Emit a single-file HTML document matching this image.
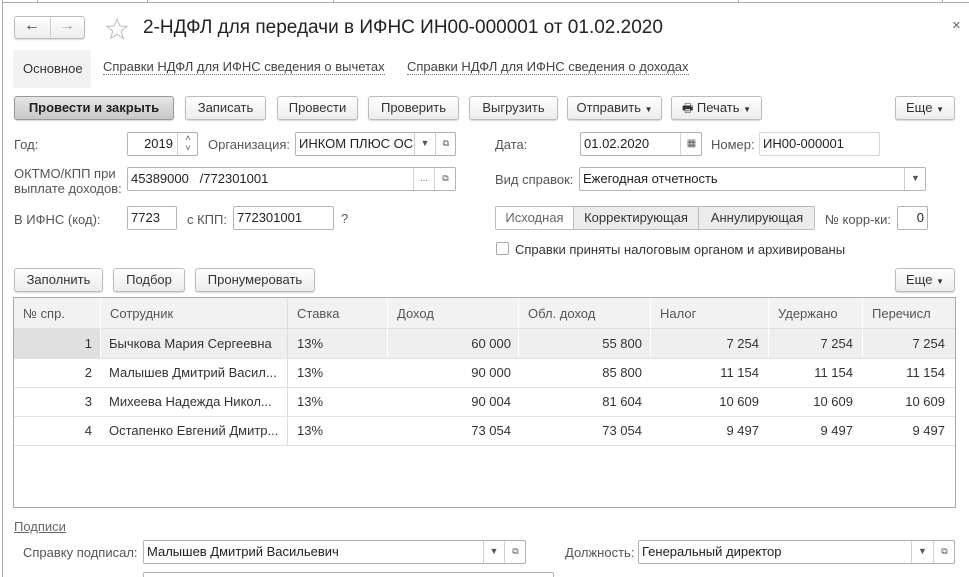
<!DOCTYPE html><html style="overflow:hidden;height:577px"><head><meta charset="utf-8"><style>
*{box-sizing:border-box}html,body{overflow:hidden}body{margin:0;width:969px;height:577px;overflow:hidden;background:#fff;font-family:"Liberation Sans",Arial,sans-serif;font-size:13px;color:#333;position:relative}
.a{position:absolute;white-space:nowrap}
.b{position:absolute;border:1px solid #bcbcbc;border-radius:3px;background:linear-gradient(#fff,#ececec);box-shadow:0 1px 1px rgba(0,0,0,.15);text-align:center;line-height:21px;color:#333}
.f{position:absolute;border:1px solid #b3b3b3;border-radius:2px;background:#fff;line-height:21px;padding-left:3px;color:#222;overflow:hidden}
.s{position:absolute;top:0;bottom:0;border-left:1px solid #d0d0d0;text-align:center;font-size:9px;color:#555}
.l{color:#555}
.lk{color:#444;border-bottom:1px dotted #777;line-height:14px}
.t div{position:absolute}
</style></head><body>
<div class="a" style="left:2px;top:0;width:1px;height:577px;background:#aaa"></div>
<div class="a" style="left:2px;top:2px;width:967px;height:1px;background:#aaa"></div>
<div class="a" style="left:37px;top:0;width:1px;height:3px;background:#aaa"></div>
<div class="a" style="left:147px;top:0;width:1px;height:3px;background:#aaa"></div>
<div class="a" style="left:333px;top:0;width:1px;height:3px;background:#aaa"></div>
<div class="a" style="left:738px;top:0;width:1px;height:3px;background:#aaa"></div>
<div class="a" style="left:942px;top:0;width:1px;height:3px;background:#aaa"></div>

<div class="b" style="left:14px;top:16px;width:71px;height:23px"></div>
<div class="a" style="left:50px;top:18px;width:1px;height:19px;background:#ccc"></div>
<div class="a" style="left:24px;top:17px;font-size:16px;color:#333">&#8592;</div>
<div class="a" style="left:59px;top:17px;font-size:16px;color:#aaa">&#8594;</div>
<svg class="a" style="left:105px;top:17px" width="24" height="24"><polygon points="12,2 14.8,9 22,9.3 16.3,14 18.3,21.5 12,17.2 5.7,21.5 7.7,14 2,9.3 9.2,9" fill="none" stroke="#bbb"/></svg>
<div class="a" style="left:143px;top:17px;font-size:19px;color:#222">2-НДФЛ для передачи в ИФНС ИН00-000001 от 01.02.2020</div>
<div class="a" style="left:952px;top:17px;font-size:15px;color:#666">×</div>

<div class="a" style="left:13px;top:50px;width:78px;height:38px;background:#f2f2f2;border-radius:3px"></div>
<div class="a" style="left:23px;top:61px">Основное</div>
<div class="a lk" style="left:103px;top:60px">Справки НДФЛ для ИФНС сведения о вычетах</div>
<div class="a lk" style="left:407px;top:60px">Справки НДФЛ для ИФНС сведения о доходах</div>

<div class="b" style="left:14px;top:96px;width:160px;height:24px;background:linear-gradient(#e6e6e6,#c8c8c8);border-color:#999;font-weight:bold;color:#222">Провести и закрыть</div>
<div class="b" style="left:185px;top:96px;width:81px;height:24px">Записать</div>
<div class="b" style="left:277px;top:96px;width:81px;height:24px">Провести</div>
<div class="b" style="left:368px;top:96px;width:91px;height:24px">Проверить</div>
<div class="b" style="left:469px;top:96px;width:89px;height:24px">Выгрузить</div>
<div class="b" style="left:567px;top:96px;width:95px;height:24px">Отправить <span style="font-size:8px">▼</span></div>
<div class="b" style="left:671px;top:96px;width:91px;height:24px"><span style="font-size:12px">🖶</span> Печать <span style="font-size:8px">▼</span></div>
<div class="b" style="left:895px;top:96px;width:60px;height:24px">Еще <span style="font-size:8px">▼</span></div>

<div class="a l" style="left:14px;top:137px">Год:</div>
<div class="f" style="left:127px;top:132px;width:71px;height:24px;text-align:right;padding-right:24px">2019<div class="s" style="left:49px;width:21px;line-height:10px">˄<br>˅</div></div>
<div class="a l" style="left:208px;top:137px">Организация:</div>
<div class="f" style="left:295px;top:132px;width:161px;height:24px">ИНКОМ ПЛЮС ОС<div class="s" style="left:118px;width:21px;background:#fff">▼</div><div class="s" style="left:139px;width:21px;background:#fff">⧉</div></div>
<div class="a l" style="left:495px;top:137px">Дата:</div>
<div class="f" style="left:580px;top:132px;width:122px;height:24px">01.02.2020<div class="s" style="left:99px;width:22px;font-size:10px">▦</div></div>
<div class="a l" style="left:711px;top:137px">Номер:</div>
<div class="f" style="left:759px;top:132px;width:121px;height:24px;border-color:#d6d6d6">ИН00-000001</div>

<div class="a l" style="left:14px;top:166px;line-height:15px">ОКТМО/КПП при<br>выплате доходов:</div>
<div class="f" style="left:127px;top:167px;width:329px;height:24px">45389000&nbsp;&nbsp; /772301001<div class="s" style="left:285px;width:21px">...</div><div class="s" style="left:306px;width:22px">⧉</div></div>
<div class="a l" style="left:495px;top:172px">Вид справок:</div>
<div class="f" style="left:579px;top:167px;width:347px;height:24px">Ежегодная отчетность<div class="s" style="left:324px;width:22px">▼</div></div>

<div class="a l" style="left:14px;top:212px">В ИФНС (код):</div>
<div class="f" style="left:127px;top:206px;width:50px;height:24px">7723</div>
<div class="a l" style="left:187px;top:212px">с КПП:</div>
<div class="f" style="left:233px;top:206px;width:101px;height:24px">772301001</div>
<div class="a l" style="left:341px;top:211px">?</div>
<div class="a" style="left:495px;top:206px;width:320px;height:24px;border:1px solid #bcbcbc;border-radius:2px;overflow:hidden">
<div class="a" style="left:0;top:0;width:77px;height:22px;text-align:center;line-height:22px;color:#666">Исходная</div>
<div class="a" style="left:77px;top:0;width:125px;height:22px;text-align:center;line-height:22px;background:#ececec;border-left:1px solid #bcbcbc">Корректирующая</div>
<div class="a" style="left:202px;top:0;width:117px;height:22px;text-align:center;line-height:22px;background:#ececec;border-left:1px solid #bcbcbc">Аннулирующая</div></div>
<div class="a l" style="left:825px;top:212px">№ корр-ки:</div>
<div class="f" style="left:897px;top:206px;width:31px;height:24px;text-align:right;padding-right:3px">0</div>
<div class="a" style="left:496px;top:242px;width:13px;height:13px;border:1px solid #aaa;border-radius:2px"></div>
<div class="a" style="left:515px;top:242px">Справки приняты налоговым органом и архивированы</div>

<div class="b" style="left:14px;top:268px;width:89px;height:24px">Заполнить</div>
<div class="b" style="left:113px;top:268px;width:72px;height:24px">Подбор</div>
<div class="b" style="left:195px;top:268px;width:120px;height:24px">Пронумеровать</div>
<div class="b" style="left:895px;top:268px;width:60px;height:24px">Еще <span style="font-size:8px">▼</span></div>

<div class="a t" style="left:13px;top:297px;width:943px;height:211px;border:1px solid #aaa;overflow:hidden">
<div style="left:0;top:0;width:941px;height:31px;background:#f2f2f2;border-bottom:1px solid #ddd"></div>
<div style="left:0;top:31px;width:941px;height:29px;background:#efefef"></div>
<div style="left:0;top:31px;width:86px;height:29px;background:#e0e0e0"></div>
<div style="left:86px;top:0;width:1px;height:60px;background:#fff"></div>
<div style="left:273px;top:0;width:1px;height:147px;background:#ddd"></div>
<div style="left:373px;top:0;width:1px;height:60px;background:#fff"></div>
<div style="left:504px;top:0;width:1px;height:60px;background:#fff"></div>
<div style="left:636px;top:0;width:1px;height:60px;background:#fff"></div>
<div style="left:754px;top:0;width:1px;height:60px;background:#fff"></div>
<div style="left:848px;top:0;width:1px;height:60px;background:#fff"></div>
<div style="left:0;top:60px;width:941px;height:1px;background:#e2e2e2"></div>
<div style="left:0;top:89px;width:941px;height:1px;background:#e2e2e2"></div>
<div style="left:0;top:118px;width:941px;height:1px;background:#e2e2e2"></div>
<div style="left:0;top:147px;width:941px;height:1px;background:#e2e2e2"></div>
<div class="l" style="left:9px;top:8px">№ спр.</div><div class="l" style="left:96px;top:8px">Сотрудник</div><div class="l" style="left:283px;top:8px">Ставка</div><div class="l" style="left:383px;top:8px">Доход</div><div class="l" style="left:514px;top:8px">Обл. доход</div><div class="l" style="left:646px;top:8px">Налог</div><div class="l" style="left:764px;top:8px">Удержано</div><div class="l" style="left:858px;top:8px">Перечисл</div>
</div>
<div class="a" style="left:14px;top:519px;color:#666;text-decoration:underline">Подписи</div>
<div class="a l" style="left:23px;top:545px">Справку подписал:</div>
<div class="f" style="left:143px;top:540px;width:383px;height:24px">Малышев Дмитрий Васильевич<div class="s" style="left:339px;width:21px">▼</div><div class="s" style="left:360px;width:22px">⧉</div></div>
<div class="a l" style="left:565px;top:545px">Должность:</div>
<div class="f" style="left:638px;top:540px;width:317px;height:24px">Генеральный директор<div class="s" style="left:272px;width:22px">▼</div><div class="s" style="left:294px;width:22px">⧉</div></div>
<div class="f" style="left:143px;top:572px;width:411px;height:5px;border-bottom:none;border-radius:2px 2px 0 0"></div>

<div class="a" style="top:336px;left:0;width:969px;height:120px">
<div class="a" style="right:877px;top:0">1</div><div class="a" style="left:109px;top:0">Бычкова Мария Сергеевна</div><div class="a" style="left:297px;top:0">13%</div><div class="a" style="right:458px;top:0">60 000</div><div class="a" style="right:327px;top:0">55 800</div><div class="a" style="right:210px;top:0">7 254</div><div class="a" style="right:116px;top:0">7 254</div><div class="a" style="right:24px;top:0">7 254</div>
<div class="a" style="right:877px;top:29px">2</div><div class="a" style="left:109px;top:29px">Малышев Дмитрий Васил...</div><div class="a" style="left:297px;top:29px">13%</div><div class="a" style="right:458px;top:29px">90 000</div><div class="a" style="right:327px;top:29px">85 800</div><div class="a" style="right:210px;top:29px">11 154</div><div class="a" style="right:116px;top:29px">11 154</div><div class="a" style="right:24px;top:29px">11 154</div>
<div class="a" style="right:877px;top:58px">3</div><div class="a" style="left:109px;top:58px">Михеева Надежда Никол...</div><div class="a" style="left:297px;top:58px">13%</div><div class="a" style="right:458px;top:58px">90 004</div><div class="a" style="right:327px;top:58px">81 604</div><div class="a" style="right:210px;top:58px">10 609</div><div class="a" style="right:116px;top:58px">10 609</div><div class="a" style="right:24px;top:58px">10 609</div>
<div class="a" style="right:877px;top:87px">4</div><div class="a" style="left:109px;top:87px">Остапенко Евгений Дмитр...</div><div class="a" style="left:297px;top:87px">13%</div><div class="a" style="right:458px;top:87px">73 054</div><div class="a" style="right:327px;top:87px">73 054</div><div class="a" style="right:210px;top:87px">9 497</div><div class="a" style="right:116px;top:87px">9 497</div><div class="a" style="right:24px;top:87px">9 497</div>
</div>
</body></html>
